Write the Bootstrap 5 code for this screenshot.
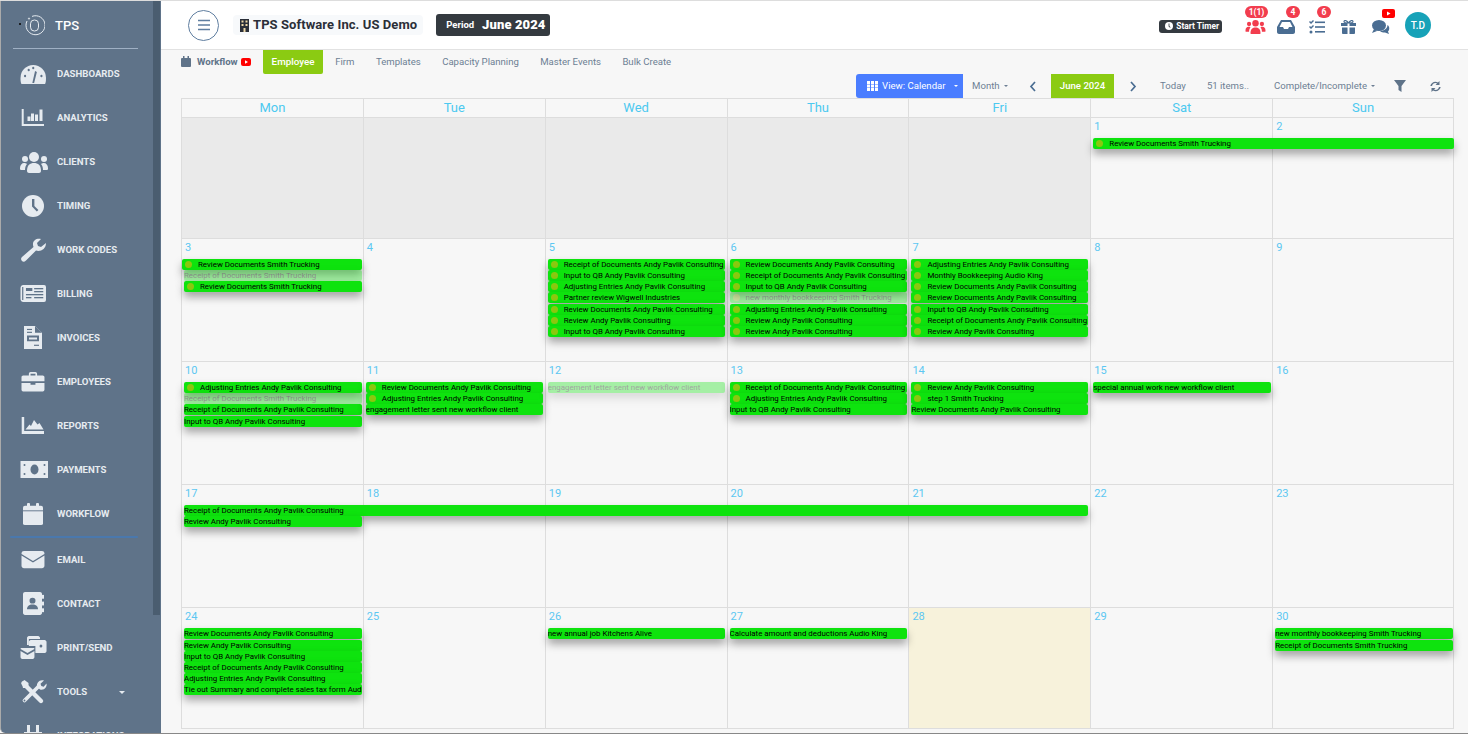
<!DOCTYPE html>
<html lang="en">
<head>
<meta charset="utf-8">
<title>TPS Workflow Calendar</title>
<link rel="stylesheet" href="https://cdn.jsdelivr.net/npm/bootstrap@5.3.0/dist/css/bootstrap.min.css">
<style>
html,body{height:100%;overflow:hidden}
body{font-family:Roboto,"Liberation Sans",sans-serif;background:#f7f7f7;color:#6d7f94}
.app-shell{height:734px;border-top:1px solid #ddd;border-bottom:1px solid #888;position:relative;overflow:hidden}
.side-rail{width:161px;flex:0 0 161px;height:100%;background:#5f7389;border-left:1px solid #aaa;overflow:hidden;position:relative;border-bottom-left-radius:5px}
.rail-thumb{position:absolute;left:152px;top:0;width:7px;height:614px;background:#4a5d70}
.rail-speck{position:absolute;left:18px;top:22px;width:1.500px;height:1.500px;background:#111;border-radius:50%}
.rail-logo{height:48px;margin:0 23px 0 12px;border-bottom:1px solid #9fb0c4;color:#fff;font-size:13px;font-weight:500;padding:2px 0 0 11px;gap:10px}
.rail-item{height:44px;display:flex;align-items:center;padding-left:19px;color:#e6ebf0;font-size:9.6px;font-weight:700;text-decoration:none;position:relative}
.rail-item svg{width:28px;height:26px;flex:0 0 28px;margin-right:9px;fill:#e6ebf0}
.rail-sep{height:2px;background:#4a78ad;margin:0 23px 0 9px;border-radius:1px}
.rail-first{margin-top:3px}
.rail-caret{position:absolute;left:118px;top:21px;border-left:3px solid transparent;border-right:3px solid transparent;border-top:3px solid #e6ebf0}
.work-area{min-width:0;padding-right:13px}
.top-strip{height:49px;background:#fff;border-bottom:1px solid #e2e2e2;margin-right:-13px;padding:0 13px 0 27px}
.menu-ring{width:31px;height:31px;border:1px solid #5f7ea0;border-radius:50%;padding:0;background:#fff;margin-right:14px}
.menu-ring svg{width:14px;height:12px;stroke:#5f7ea0;fill:none;display:block;margin:auto}
.firm-pill{height:20px;padding:0 6px 0 5px;background:#f7f9fb;border-radius:4px;font-size:13px;font-weight:700;color:#2b2f38;letter-spacing:.08px;white-space:nowrap;margin-right:13px;gap:2px}
.firm-pill svg{width:13px;height:13px}
.period-box{height:22px;background:#343a40;color:#fff;border-radius:3px;font-weight:700;width:114px;padding-left:10px;white-space:nowrap}
.period-box small{font-size:9.5px;margin-right:8px;font-weight:700}
.period-box b{font-size:13px;letter-spacing:.1px}
.timer-btn{height:13px;background:#343a40;color:#fff;border-radius:3px;font-size:8.4px;font-weight:700;padding:0 3px 0 6px;gap:3px;white-space:nowrap;position:relative;top:1px;border:0}
.timer-btn svg{width:8px;height:8px;fill:#fff}
.top-ico{position:absolute;top:19px;height:14px}
.top-ico svg{width:100%;height:100%;display:block;fill:#4a6d92}
.top-tray{position:relative;width:210px;height:48px;flex:0 0 210px;margin-left:23px}
.i-grp{left:0;width:21px;top:18px;height:15px}.i-grp svg{fill:#f23d4e}
.i-box{left:32px;width:18px}
.i-task{left:64px;width:16px}
.i-gift{left:96px;width:15px}
.i-chat{left:127px;width:18px}
.pill-red{position:absolute;top:5px;height:12px;background:#f23d4e;color:#fff;font-size:8.5px;font-weight:700;border-radius:6px;padding:0;display:flex;align-items:center;justify-content:center;line-height:1}
.p-a{left:0;width:23px}.p-b{left:41px;width:14px}.p-c{left:72px;width:14px}
.yt-red{position:absolute;left:137px;top:8px;width:13px;height:9px}
.ava-dot{position:absolute;left:160px;top:11px;width:26px;height:26px;border-radius:50%;background:#17a2b8;color:#fff;font-size:10px;font-weight:500;display:flex;align-items:center;justify-content:center}
.tab-line{height:24px;padding-left:20px;font-size:9.6px;white-space:nowrap}
.tab-title{font-weight:700;color:#5f7389;gap:3px;width:82px}
.tab-title>svg:first-child{width:10px;height:11px;fill:#5f7389;margin-right:3px}
.tab-title>svg:last-child{width:10px;height:8px;margin-left:0}
.tab-on{background:#8bcb12;color:#fff;font-weight:500;height:24px;width:60px;border-radius:0 0 2px 2px;font-size:9.8px;display:flex;align-items:center;justify-content:center}
.tab-off{color:#6d7f94;padding:0 10.7px;text-decoration:none}
.tab-firm{margin-left:1.500px}
.tool-line{height:24px;font-size:9.6px;white-space:nowrap;padding-right:14px;color:#6d7f94}
.view-btn{height:24px;width:107px;background:#4a7dff;color:#fff;border:0;border-radius:3px 0 0 3px;font-size:9.6px;padding:0 0 0 11px;gap:4px}
.view-btn svg{width:11px;height:10px;fill:#fff}
.mini-caret{display:inline-block;border-left:2px solid transparent;border-right:2px solid transparent;border-top:2px solid currentColor;margin-left:4px;vertical-align:2px}
.tb-month{margin-left:9px;width:36px}
.tb-prev{margin-left:21px;width:8px}
.tb-now{margin-left:14px;width:63px;height:24px;background:#8bcb12;color:#fff;display:flex;align-items:center;justify-content:center;font-weight:500}
.tb-next{margin-left:15px;width:8px}
.tb-today{margin-left:23px}
.tb-count{margin-left:21px}
.tb-state{margin-left:25px}
.tb-filter{margin-left:19px;width:12px;height:12px;fill:#5f7389}
.tb-sync{margin-left:24px;width:11px;height:11px;fill:#5f7389}
.tool-line svg.chev{width:8px;height:11px;stroke:#4a6d92;fill:none;stroke-width:1.7}
.cal-board{margin-left:20px;width:1273px}
.cal-head{display:grid;grid-template-columns:repeat(7,1fr);height:20px;border-top:1px solid #ddd}
.cal-head>div{border-left:1px solid #ddd;border-bottom:1px solid #ddd;text-align:center;color:#4cc9f0;font-size:13px;line-height:18px}
.cal-head>div:last-child{border-right:1px solid #ddd}
.cal-week{display:grid;grid-template-columns:repeat(7,minmax(0,1fr));grid-template-rows:20px repeat(7,auto) 1fr;height:123px;border-bottom:1px solid #ddd}
.wk-short{height:121px}
.cal-day{grid-row:1/-1;border-left:1px solid #ddd;font-size:11px;line-height:11px;color:#5cc7f2;padding:3px 0 0 3px}
.d1{grid-column:1}.d2{grid-column:2}.d3{grid-column:3}.d4{grid-column:4}.d5{grid-column:5}.d6{grid-column:6}.d7{grid-column:7;border-right:1px solid #ddd}
.cal-off{background:#eaeaea}
.cal-now{background:#f7f2db}
.tk{height:10.6px;margin:0 1.5px .4px 3px;padding-top:1px;background:#0ee30e;color:#000;font-size:7.9px;line-height:10px;border-radius:2px;box-shadow:0 5px 9px rgba(0,0,0,.35);white-space:nowrap;overflow:hidden;display:flex;align-items:center;position:relative}
.tk i{width:7px;height:7px;flex:0 0 7px;border-radius:50%;background:#8bc80f;margin:-1px 6px 0 3px}
.tk-l{margin-left:1px}
.tk-fade{opacity:.35}
.tk-gap{margin-top:1px}
.tk-end{margin-right:0}
.r1{grid-row:2}.r2{grid-row:3}.r3{grid-row:4}.r4{grid-row:5}.r5{grid-row:6}.r6{grid-row:7}.r7{grid-row:8}
.c1{grid-column:1/2;margin-right:1px}.c2{grid-column:2/3}.c3{grid-column:3/4}.c4{grid-column:4/5}.c5{grid-column:5/6;margin-right:2px}.c6{grid-column:6/7}.c7{grid-column:7/8}
.c6s{grid-column:6/8}.c1s{grid-column:1/6;margin-right:2px}
</style>
</head>
<body>
<div class="app-shell d-flex">
  <nav class="side-rail">
    <span class="rail-speck"></span>
    <div class="rail-logo d-flex align-items-center">
      <svg width="21" height="21" viewBox="0 0 21 21" fill="none" stroke="#e6ebf0" stroke-width="1"><path d="M3 6A9.5 9.500 0 1 0 8 1.400" /><rect x="6.500" y="5" width="8" height="11" rx="3.800"/><circle cx="5" cy="3.600" r=".6"/></svg>
      <span>TPS</span>
    </div>
    <a class="rail-item rail-first" href="#"><svg viewBox="0 0 28 24"><g transform="translate(.5 0) scale(.91 1)"><path d="M1 22c-1-2-1-4-1-6A14 13 0 0 1 28 16c0 2 0 4-1 6z"/><path d="M13 21l3-12 2 1-3 11z" fill="#5f7389"/><g fill="#5f7389"><circle cx="5" cy="14" r="1.200"/><circle cx="9" cy="8" r="1.200"/><circle cx="14" cy="6" r="1.200"/><circle cx="23" cy="14" r="1.200"/></g></g></svg>DASHBOARDS</a>
    <a class="rail-item" href="#"><svg viewBox="0 0 28 24"><path d="M1.700 3h2v15H24v2H1.700z"/><rect x="7.500" y="10.500" width="3" height="4.500"/><rect x="11" y="7.500" width="3" height="7.500"/><rect x="15" y="8.500" width="3" height="6.500"/><rect x="19.500" y="3.500" width="3" height="11.500"/></svg>ANALYTICS</a>
    <a class="rail-item" href="#"><svg viewBox="0 0 28 24"><circle cx="14" cy="7" r="5"/><circle cx="5" cy="9" r="3"/><circle cx="24" cy="9" r="3"/><path d="M7 21c0-6 3-8 7-8s7 2 7 8c0 1-1 2-2 2H9c-1 0-2-1-2-2z"/><path d="M0 18c0-3 2-5 4-5 1 0 2 0 3 1-1 1-2 3-2 6H1c-1 0-1-1-1-2zM28 18c0-3-2-5-4-5-1 0-2 0-3 1 1 1 2 3 2 6h4c1 0 1-1 1-2z"/></svg>CLIENTS</a>
    <a class="rail-item" href="#"><svg viewBox="0 0 28 24"><g transform="translate(-1 0)"><circle cx="14" cy="12" r="11"/><path d="M13 5h2.400v7l4 4-1.600 1.600-4.800-5z" fill="#5f7389"/></g></svg>TIMING</a>
    <a class="rail-item" href="#"><svg viewBox="0 0 28 24"><path d="M26 5l-5 4-3-1-1-3 4-4c-4-1-8 1-8 5 0 1 0 2 .5 3L2 19c-1.500 1.500-1 3 0 4s2.500 1 4-.5l10-10c4 1.500 10-1 10-7.500z"/></svg>WORK CODES</a>
    <a class="rail-item" href="#"><svg viewBox="0 0 28 24"><g transform="translate(.5 -1) scale(.91 1)"><path d="M3 4h23a2 2 0 0 1 2 2v13a2 2 0 0 1-2 2H3c-1.500 0-3-1-3-3V7c0-2 1.500-3 3-3z"/><g fill="#5f7389"><rect x="1.800" y="6" width="1.300" height="13"/><rect x="6" y="7" width="7" height="3"/><rect x="15" y="7" width="10" height="1.300"/><rect x="15" y="10" width="10" height="1.300"/><rect x="6" y="13" width="19" height="1.300"/><rect x="6" y="16" width="6" height="1.300"/><rect x="15" y="16" width="10" height="1.300"/></g></g></svg>BILLING</a>
    <a class="rail-item" href="#"><svg viewBox="0 0 28 24"><g transform="translate(-1 0) scale(1 .96)"><path d="M5 0h11l7 7v17H5z"/><g fill="#5f7389"><path d="M16 0v7h7z"/><rect x="8" y="3" width="5" height="1.200"/><rect x="8" y="6" width="5" height="1.200"/><path d="M8 10h12v6H8zm2 2v2h8v-2z"/><rect x="15" y="19.500" width="5" height="1.200"/></g></g></svg>INVOICES</a>
    <a class="rail-item" href="#"><svg viewBox="0 0 28 24"><g transform="translate(1.500 2) scale(.82 .85)"><path d="M9 4V2c0-1 1-2 2-2h6c1 0 2 1 2 2v2h7c1 0 2 1 2 2v5H0V6c0-1 1-2 2-2zm2 0h6V2h-6z"/><path d="M0 13h11v2h6v-2h11v8c0 1-1 2-2 2H2c-1 0-2-1-2-2z"/></g></svg>EMPLOYEES</a>
    <a class="rail-item" href="#"><svg viewBox="0 0 28 24"><path d="M1.700 3h2.500v14H24v3H1.700z"/><path d="M5.500 15.500l4-5 1.500 1.500 3-6 3.500 4.500 2-1.500 4 6.500z"/></svg>REPORTS</a>
    <a class="rail-item" href="#"><svg viewBox="0 0 28 24"><g transform="translate(.5 0)"><path d="M0 3h28v17H0z"/><ellipse cx="14" cy="11.500" rx="4" ry="5" fill="#5f7389"/><g fill="#5f7389"><circle cx="4" cy="7" r="1"/><circle cx="24" cy="7" r="1"/><circle cx="4" cy="16" r="1"/><circle cx="24" cy="16" r="1"/></g></g></svg>PAYMENTS</a>
    <a class="rail-item" href="#"><svg viewBox="0 0 28 24"><g transform="translate(-1 1) scale(1 .92)"><rect x="4" y="3" width="20" height="21" rx="2"/><rect x="8" y="0" width="3" height="5" rx="1"/><rect x="17" y="0" width="3" height="5" rx="1"/><rect x="4" y="8" width="20" height="1" fill="#5f7389"/></g></svg>WORKFLOW</a>
    <div class="rail-sep"></div>
    <a class="rail-item" href="#"><svg viewBox="0 0 28 24"><g transform="translate(1.500 1.400) scale(.82 .82)"><path d="M3 2h22c1.500 0 3 1 3 3v.5L14 14 0 5.500V5c0-2 1.500-3 3-3z"/><path d="M0 7.500L14 16l14-8.500V20c0 1.500-1.500 3-3 3H3c-1.500 0-3-1.500-3-3z"/></g></svg>EMAIL</a>
    <a class="rail-item" href="#"><svg viewBox="0 0 28 24"><g transform="translate(-2 0) scale(1 .96)"><path d="M5 2c0-1 1-2 2-2h15c1 0 2 1 2 2v20c0 1-1 2-2 2H7c-1 0-2-1-2-2z"/><rect x="24" y="3" width="2" height="4"/><rect x="24" y="10" width="2" height="4"/><rect x="24" y="17" width="2" height="4"/><circle cx="14.500" cy="9" r="3" fill="#5f7389"/><path d="M9 18c0-3 2-5 5.500-5s5.500 2 5.500 5z" fill="#5f7389"/></g></svg>CONTACT</a>
    <a class="rail-item" href="#"><svg viewBox="0 0 28 24"><g transform="translate(.5 -1) scale(.93 1)"><path d="M7 3c0-1 1-2 2-2h10c1 0 2 1 2 2v1H9v6H7z"/><path d="M9 7c0-1 1-2 2-2h15c1 0 2 1 2 2v9c0 1-1 2-2 2H16v-7H9z"/><circle cx="22" cy="11" r="1.500" fill="#5f7389"/><path d="M1 13h13c.5 0 1 .5 1 1L7.500 18 0 14c0-.5.500-1 1-1z"/><path d="M0 16l7.500 4 7.500-4v6c0 1-1 2-2 2H2c-1 0-2-1-2-2z"/></g></svg>PRINT/SEND</a>
    <a class="rail-item" href="#"><svg viewBox="0 0 28 24"><path d="M3.500 3.500L21 21" stroke="#e6ebf0" stroke-width="4.400" stroke-linecap="round" fill="none"/><path d="M1.500 2l3-2 4 3v3l-2 2H3z"/><path d="M4.500 20.500L18 7" stroke="#e6ebf0" stroke-width="3.800" stroke-linecap="round" fill="none"/><path d="M24 .5l-3.500 3.200.8 2.300 2.300.8L26.500 3.500c.7 3.500-2 7-6.500 6l-3-3c-.6-3.500 2.500-7.500 7-6z"/><circle cx="4.500" cy="20.500" r=".9" fill="#5f7389"/></svg>TOOLS<span class="rail-caret"></span></a>
    <a class="rail-item" href="#"><svg viewBox="0 0 28 24"><g transform="translate(-1 0)"><rect x="8" y="1" width="3" height="7"/><rect x="17" y="1" width="3" height="7"/><rect x="5" y="8" width="18" height="6"/></g></svg>INTEGRATIONS</a>
    <div class="rail-thumb"></div>
  </nav>
  <main class="work-area flex-grow-1">
    <header class="top-strip d-flex align-items-center">
      <button class="menu-ring btn" type="button" aria-label="menu"><svg viewBox="0 0 14 12" stroke-width="1.300"><path d="M1 1.500h12M1 6h12M1 10.500h12"/></svg></button>
      <div class="firm-pill d-flex align-items-center"><svg viewBox="0 0 13 13"><rect x="2" y="0" width="9" height="13" fill="#2b2f38"/><g fill="#f0d9a8"><rect x="3.500" y="1.500" width="2" height="2"/><rect x="7.500" y="1.500" width="2" height="2"/><rect x="3.500" y="5" width="2" height="2"/><rect x="7.500" y="5" width="2" height="2"/><rect x="5.500" y="9" width="2" height="4"/></g></svg><span>TPS Software Inc. US Demo</span></div>
      <div class="period-box d-flex align-items-center"><small>Period</small><b>June 2024</b></div>
      <div class="ms-auto d-flex align-items-center">
        <button class="timer-btn btn d-flex align-items-center" type="button"><svg viewBox="0 0 10 10"><circle cx="5" cy="5" r="5"/><path d="M4.500 2h1v3l1.500 1.500-.7.700L4.500 5.500z" fill="#343a40"/></svg>Start Timer</button>
        <div class="top-tray">
          <div class="top-ico i-grp"><svg viewBox="0 0 28 21"><circle cx="14" cy="6" r="4.500"/><circle cx="5" cy="7" r="3"/><circle cx="23" cy="7" r="3"/><path d="M7 20c0-6 3-8 7-8s7 2 7 8c0 1-1 1-2 1H9c-1 0-2 0-2-1z"/><path d="M0 16c0-3 2-5 4-5 1 0 2 0 3 1-1 1-2 3-2 6H1c-1 0-1-1-1-2zM28 16c0-3-2-5-4-5-1 0-2 0-3 1 1 1 2 3 2 6h4c1 0 1-1 1-2z"/></svg></div>
          <span class="pill-red p-a">1(1)</span>
          <div class="top-ico i-box"><svg viewBox="0 0 18 14"><path d="M4 0h10l4 7v5c0 1-1 2-2 2H2c-1 0-2-1-2-2V7zm1 2L2.500 7H6l1 2h4l1-2h3.500L13 2z"/></svg></div>
          <span class="pill-red p-b">4</span>
          <div class="top-ico i-task"><svg viewBox="0 0 16 14"><path d="M0 2l1 -1 1 1 2-2 1 1-3 3zM0 7l1-1 1 1 2-2 1 1-3 3z"/><circle cx="2" cy="12" r="1.500"/><rect x="6" y="1.500" width="10" height="1.600"/><rect x="6" y="6.200" width="10" height="1.600"/><rect x="6" y="11" width="10" height="1.600"/></svg></div>
          <span class="pill-red p-c">6</span>
          <div class="top-ico i-gift"><svg viewBox="0 0 15 14"><path d="M0 3h6.500v3H0zM8.500 3H15v3H8.500zM1 7.500h5.500V14H2c-.5 0-1-.5-1-1zM8.500 7.500H14V13c0 .5-.5 1-1 1H8.500z"/><path d="M7.500 3C6 0 3 0 3 1.500S5 3 7.500 3zm0 0C9 0 12 0 12 1.500S10 3 7.500 3z" fill="none" stroke="#4a6d92" stroke-width="1.200"/></svg></div>
          <div class="top-ico i-chat"><svg viewBox="0 0 18 14"><ellipse cx="7" cy="5.500" rx="7" ry="5.500"/><path d="M2 9L0 13l5-2z"/><path d="M15.500 5c2 1 2.500 5 .5 6.500l1 2.500-4-1.500c-2 0-4-.5-5-1.500 4 0 7.500-2.500 7.500-6z"/></svg></div>
          <svg class="yt-red" viewBox="0 0 13 9"><rect width="13" height="9" rx="2" fill="#f00"/><path d="M5 2.500v4l3.500-2z" fill="#fff"/></svg>
          <span class="ava-dot">T.D</span>
        </div>
      </div>
    </header>
    <div class="tab-line d-flex align-items-center">
      <div class="tab-title d-flex align-items-center"><svg viewBox="0 0 10 11"><rect x="0" y="2" width="10" height="9" rx="1"/><rect x="2" y="0" width="1.500" height="3"/><rect x="6.500" y="0" width="1.500" height="3"/></svg>Workflow<svg viewBox="0 0 10 8"><rect width="10" height="8" rx="2" fill="#f00"/><path d="M4 2.300v3.400L7 4z" fill="#fff"/></svg></div>
      <a class="tab-on text-decoration-none" href="#">Employee</a>
      <a class="tab-off tab-firm" href="#">Firm</a>
      <a class="tab-off" href="#">Templates</a>
      <a class="tab-off" href="#">Capacity Planning</a>
      <a class="tab-off" href="#">Master Events</a>
      <a class="tab-off" href="#">Bulk Create</a>
    </div>
    <div class="tool-line d-flex align-items-center justify-content-end">
      <button class="view-btn btn d-flex align-items-center" type="button"><svg viewBox="0 0 11 10"><path d="M0 0h3v3H0zM4 0h3v3H4zM8 0h3v3H8zM0 3.500h3v3H0zM4 3.500h3v3H4zM8 3.500h3v3H8zM0 7h3v3H0zM4 7h3v3H4zM8 7h3v3H8z"/></svg>View: Calendar<span class="mini-caret"></span></button>
      <span class="tb-month">Month<span class="mini-caret"></span></span>
      <svg class="chev tb-prev" viewBox="0 0 8 11"><path d="M6 1L2 5.500 6 10"/></svg>
      <span class="tb-now">June 2024</span>
      <svg class="chev tb-next" viewBox="0 0 8 11"><path d="M2 1l4 4.500L2 10"/></svg>
      <span class="tb-today">Today</span>
      <span class="tb-count">51 items..</span>
      <span class="tb-state">Complete/Incomplete<span class="mini-caret"></span></span>
      <svg class="tb-filter" viewBox="0 0 12 12"><path d="M0 0h12L7.500 6v6l-3-2V6z"/></svg>
      <svg class="tb-sync" viewBox="0 0 11 11"><path d="M9.500 0v4h-4l1.500-1.500C5 1.500 2.500 2.500 2 5H.3C1 1.500 5-.5 8 1.500zM1.500 11V7h4L4 8.500c2 1 4.500 0 5-2.500h1.700C10 9.500 6 11.500 3 9.500z"/></svg>
    </div>
    <section class="cal-board">
      <div class="cal-head"><div>Mon</div><div>Tue</div><div>Wed</div><div>Thu</div><div>Fri</div><div>Sat</div><div>Sun</div></div>

      <div class="cal-week wk-short">
        <div class="cal-day d1 cal-off"></div><div class="cal-day d2 cal-off"></div><div class="cal-day d3 cal-off"></div><div class="cal-day d4 cal-off"></div><div class="cal-day d5 cal-off"></div><div class="cal-day d6">1</div><div class="cal-day d7">2</div>
        <div class="tk c6s r1 tk-end"><i></i>Review Documents Smith Trucking</div>
      </div>

      <div class="cal-week">
        <div class="cal-day d1">3</div><div class="cal-day d2">4</div><div class="cal-day d3">5</div><div class="cal-day d4">6</div><div class="cal-day d5">7</div><div class="cal-day d6">8</div><div class="cal-day d7">9</div>
        <div class="tk tk-l c1 r1"><i></i>Review Documents Smith Trucking</div>
        <div class="tk tk-fade c1 r2">Receipt of Documents Smith Trucking</div>
        <div class="tk c1 r3"><i></i>Review Documents Smith Trucking</div>
        <div class="tk c3 r1"><i></i>Receipt of Documents Andy Pavlik Consulting</div>
        <div class="tk c3 r2"><i></i>Input to QB Andy Pavlik Consulting</div>
        <div class="tk c3 r3"><i></i>Adjusting Entries Andy Pavlik Consulting</div>
        <div class="tk c3 r4"><i></i>Partner review Wigwell Industries</div>
        <div class="tk tk-gap c3 r5"><i></i>Review Documents Andy Pavlik Consulting</div>
        <div class="tk c3 r6"><i></i>Review Andy Pavlik Consulting</div>
        <div class="tk c3 r7"><i></i>Input to QB Andy Pavlik Consulting</div>
        <div class="tk c4 r1"><i></i>Review Documents Andy Pavlik Consulting</div>
        <div class="tk c4 r2"><i></i>Receipt of Documents Andy Pavlik Consulting</div>
        <div class="tk c4 r3"><i></i>Input to QB Andy Pavlik Consulting</div>
        <div class="tk tk-fade c4 r4"><i></i>new monthly bookkeeping Smith Trucking</div>
        <div class="tk tk-gap c4 r5"><i></i>Adjusting Entries Andy Pavlik Consulting</div>
        <div class="tk c4 r6"><i></i>Review Andy Pavlik Consulting</div>
        <div class="tk c4 r7"><i></i>Review Andy Pavlik Consulting</div>
        <div class="tk c5 r1"><i></i>Adjusting Entries Andy Pavlik Consulting</div>
        <div class="tk c5 r2"><i></i>Monthly Bookkeeping Audio King</div>
        <div class="tk c5 r3"><i></i>Review Documents Andy Pavlik Consulting</div>
        <div class="tk c5 r4"><i></i>Review Documents Andy Pavlik Consulting</div>
        <div class="tk tk-gap c5 r5"><i></i>Input to QB Andy Pavlik Consulting</div>
        <div class="tk c5 r6"><i></i>Receipt of Documents Andy Pavlik Consulting</div>
        <div class="tk c5 r7"><i></i>Review Andy Pavlik Consulting</div>
      </div>

      <div class="cal-week">
        <div class="cal-day d1">10</div><div class="cal-day d2">11</div><div class="cal-day d3">12</div><div class="cal-day d4">13</div><div class="cal-day d5">14</div><div class="cal-day d6">15</div><div class="cal-day d7">16</div>
        <div class="tk c1 r1"><i></i>Adjusting Entries Andy Pavlik Consulting</div>
        <div class="tk tk-fade c1 r2">Receipt of Documents Smith Trucking</div>
        <div class="tk c1 r3">Receipt of Documents Andy Pavlik Consulting</div>
        <div class="tk tk-gap c1 r4">Input to QB Andy Pavlik Consulting</div>
        <div class="tk c2 r1"><i></i>Review Documents Andy Pavlik Consulting</div>
        <div class="tk c2 r2"><i></i>Adjusting Entries Andy Pavlik Consulting</div>
        <div class="tk c2 r3">engagement letter sent new workflow client</div>
        <div class="tk tk-fade c3 r1">engagement letter sent new workflow client</div>
        <div class="tk c4 r1"><i></i>Receipt of Documents Andy Pavlik Consulting</div>
        <div class="tk c4 r2"><i></i>Adjusting Entries Andy Pavlik Consulting</div>
        <div class="tk c4 r3">Input to QB Andy Pavlik Consulting</div>
        <div class="tk c5 r1"><i></i>Review Andy Pavlik Consulting</div>
        <div class="tk c5 r2"><i></i>step 1 Smith Trucking</div>
        <div class="tk c5 r3">Review Documents Andy Pavlik Consulting</div>
        <div class="tk c6 r1">special annual work new workflow client</div>
      </div>

      <div class="cal-week">
        <div class="cal-day d1">17</div><div class="cal-day d2">18</div><div class="cal-day d3">19</div><div class="cal-day d4">20</div><div class="cal-day d5">21</div><div class="cal-day d6">22</div><div class="cal-day d7">23</div>
        <div class="tk c1s r1">Receipt of Documents Andy Pavlik Consulting</div>
        <div class="tk c1 r2">Review Andy Pavlik Consulting</div>
      </div>

      <div class="cal-week wk-short">
        <div class="cal-day d1">24</div><div class="cal-day d2">25</div><div class="cal-day d3">26</div><div class="cal-day d4">27</div><div class="cal-day d5 cal-now">28</div><div class="cal-day d6">29</div><div class="cal-day d7">30</div>
        <div class="tk c1 r1">Review Documents Andy Pavlik Consulting</div>
        <div class="tk tk-gap c1 r2">Review Andy Pavlik Consulting</div>
        <div class="tk c1 r3">Input to QB Andy Pavlik Consulting</div>
        <div class="tk c1 r4">Receipt of Documents Andy Pavlik Consulting</div>
        <div class="tk c1 r5">Adjusting Entries Andy Pavlik Consulting</div>
        <div class="tk c1 r6">Tie out Summary and complete sales tax form Audio King</div>
        <div class="tk c3 r1">new annual job Kitchens Alive</div>
        <div class="tk c4 r1">Calculate amount and deductions Audio King</div>
        <div class="tk c7 r1">new monthly bookkeeping Smith Trucking</div>
        <div class="tk tk-gap c7 r2">Receipt of Documents Smith Trucking</div>
      </div>
    </section>
  </main>
</div>
<script src="https://cdn.jsdelivr.net/npm/bootstrap@5.3.0/dist/js/bootstrap.bundle.min.js"></script>
</body>
</html>
